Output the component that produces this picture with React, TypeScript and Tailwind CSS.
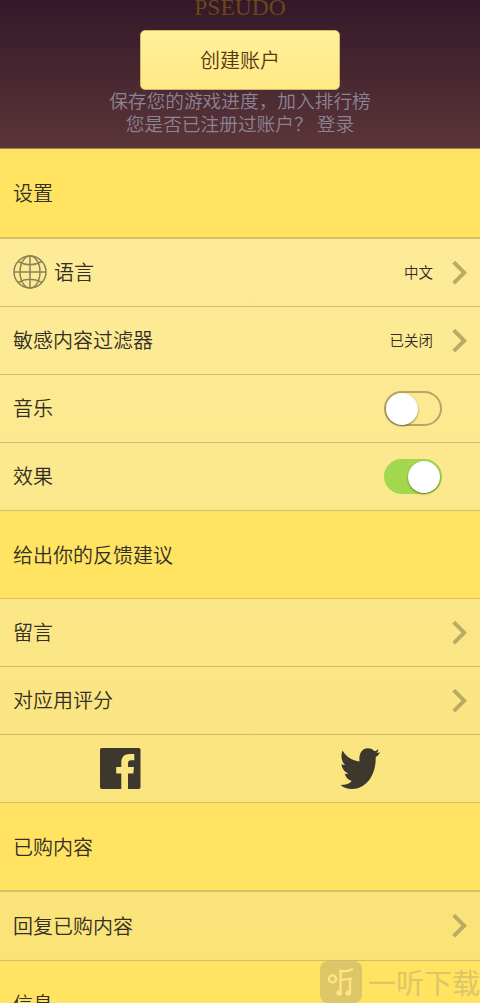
import React from 'react';

function Chevron() {
  return (
    <svg className="w-4 h-6 ml-[18px]" viewBox="0 0 16 24" fill="none" stroke="#baaa64" strokeWidth="4">
      <path d="M2.7 1.2L13.2 11.7L2.7 22.2" />
    </svg>
  );
}

function Globe() {
  return (
    <svg className="w-[34px] h-[34px] mr-[7px]" viewBox="0 0 34 34" fill="none" stroke="#8c8156" strokeWidth="1.5">
      <circle cx="17" cy="17" r="16" />
      <ellipse cx="17" cy="17" rx="10" ry="16" />
      <path d="M17 1V33M1 17H33M5 6.5Q17 13 29 6.5M5 27.5Q17 21 29 27.5" />
    </svg>
  );
}

function FacebookIcon() {
  return (
    <svg className="w-[41px] h-[41px]" viewBox="0 0 41 41" fill="#3d372e">
      <path d="M1.8 0H38.7Q40.5 0 40.5 1.8V39.2Q40.5 41 38.7 41H28V25.5H33.3L34 19H28V15.5C28 13 29 12.2 31 12.2H34.3V6H30C24 6 21.3 9.4 21.3 14.5V19H16.2V25.5H21.3V41H1.8Q0 41 0 39.2V1.8Q0 0 1.8 0Z" />
    </svg>
  );
}

function TwitterIcon() {
  return (
    <svg className="w-[40px] h-[41px]" viewBox="0 0 40 41" fill="#3d372e">
      <path d="M2.6 2.5C6 8.5 12 12.8 19.5 13.5C18.5 6 22 .3 27.8 .3C31 .3 33 1.7 34.2 3C36 3 37.3 2 38.4 .9C38.3 2.8 37.6 4 36.5 5C37.8 5 39 4.7 40 4.2C39 6.5 37.5 8 35.7 9C36.2 26 27 41 12 41C7.5 41 3.5 39.5 .5 37C5 37 9 36 11.8 33C8.5 32.2 5.7 29.5 4.7 25.8C6 26 7.2 26 8.2 25.5C4 23.8 1.8 20 1.5 16C2.8 16.8 3.8 17.1 5 17.1C1.2 13 .6 7 2.6 2.5Z" />
    </svg>
  );
}

function Toggle({ on }: { on: boolean }) {
  return (
    <button
      className={`w-[58px] h-[35px] mr-[25px] rounded-full border-2 flex items-center ${
        on ? 'bg-[#a2d84d] border-[#a2d84d] justify-end' : 'border-[#b5a668] justify-start'
      }`}
    >
      <span className="w-8 h-8 rounded-full bg-white shadow-[0_1px_2px_rgba(60,70,0,0.65)]" />
    </button>
  );
}

function Section({ title, className = '' }: { title: string; className?: string }) {
  return (
    <h2 className={`bg-[#ffe361] border-[#d6bf6b] px-[13px] flex items-center shrink-0 ${className}`}>{title}</h2>
  );
}

function Row({ label, className = 'h-[68px]', children }: { label: React.ReactNode; className?: string; children: React.ReactNode }) {
  return (
    <div className={`border-b border-[#d3bc70] px-[13px] flex items-center justify-between shrink-0 ${className}`}>
      <div className="flex items-center pb-px">{label}</div>
      <div className="flex items-center text-[14.5px]">{children}</div>
    </div>
  );
}

export default function App() {
  return (
    <div className="relative w-[480px] h-[1003px] overflow-hidden flex flex-col font-['Noto_Sans_CJK_SC',sans-serif] font-[350] text-xl leading-6 text-[#332e26]">
      <header className="h-[149px] shrink-0 bg-gradient-to-b from-[#341829] to-[#5b3638] flex flex-col items-center border-b border-[#a18550]">
        <div className="h-[30px] font-['Liberation_Serif',serif] font-normal text-[23.5px] leading-[15px] text-[#69461b]">PSEUDO</div>
        <button className="w-[200px] h-[60px] shrink-0 rounded-[5px] border border-[#d6b767] bg-gradient-to-b from-[#fff09b] to-[#ffe985] text-[#573710]">
          创建账户
        </button>
        <div className="-mt-0.5 text-[18.7px] leading-[23px] text-center text-[#8d8395]">
          <p>保存您的游戏进度，加入排行榜</p>
          <p>您是否已注册过账户？ 登录</p>
        </div>
      </header>

      <main className="flex-1 min-h-0 flex flex-col bg-gradient-to-b from-[#fdec9c] to-[#fae274]">
        <Section title="设置" className="h-[90px] border-b-2" />
        <Row label={<><Globe />语言</>}>
          <span className="pb-0.5">中文</span><Chevron />
        </Row>
        <Row label="敏感内容过滤器">
          <span className="pb-0.5">已关闭</span><Chevron />
        </Row>
        <Row label="音乐"><Toggle on={false} /></Row>
        <Row label="效果"><Toggle on /></Row>

        <Section title="给出你的反馈建议" className="h-[88px] border-b" />
        <Row label="留言"><Chevron /></Row>
        <Row label="对应用评分"><Chevron /></Row>
        <div className="h-[68px] shrink-0 border-b border-[#d3bc70] grid grid-cols-2 place-items-center">
          <FacebookIcon />
          <TwitterIcon />
        </div>

        <Section title="已购内容" className="h-[89px] border-b-2" />
        <Row label="回复已购内容" className="h-[69px]"><Chevron /></Row>
        <Section title="信息" className="h-[86px]" />
      </main>

      <div className="absolute left-[320px] top-[961px] flex items-center whitespace-nowrap font-normal text-[28px] leading-[42px] text-[#dcc668]">
        <svg className="w-[42px] h-[42px] mr-[6px]" viewBox="0 0 42 42" fill="none" stroke="#ffe680" strokeWidth="2.3">
          <rect width="42" height="42" rx="8" fill="#dcc668" stroke="none" />
          <circle cx="12.5" cy="18" r="3.6" />
          <path d="M20.5 32V10Q28 11 33 8M20.5 18.5Q27 19 32 17M30 18V32" />
          <circle cx="19.2" cy="32" r="1.6" />
          <circle cx="28.4" cy="32" r="1.6" />
        </svg>
        一听下载
      </div>
    </div>
  );
}
